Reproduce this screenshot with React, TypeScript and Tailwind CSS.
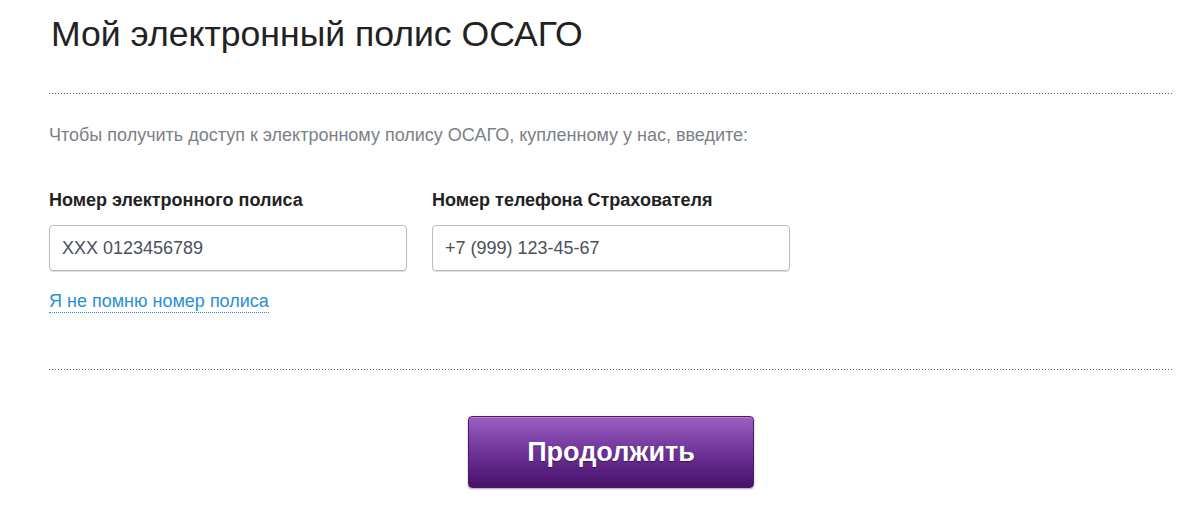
export default function App() {
  const dotted =
    "h-px w-full bg-[linear-gradient(to_right,#666_34%,transparent_0)] bg-[length:3px_1px] bg-repeat-x";

  return (
    <div className="min-h-[518px] bg-white pl-[49px] pr-[27px] font-['Liberation_Sans',Arial,sans-serif]">
      <h1 className="pt-[13px] pl-[2px] text-[35.6px] leading-[42px] text-[#222]">
        Мой электронный полис ОСАГО
      </h1>

      <div className={`mt-[38px] ${dotted}`} />

      <p className="mt-[31px] text-[18px] leading-[20px] text-[#7b7f88]">
        Чтобы получить доступ к электронному полису ОСАГО, купленному у нас, введите:
      </p>

      <div className="mt-[45px] flex gap-[25px]">
        <div className="w-[358px]">
          <label className="block text-[18px] font-bold leading-[20px] text-[#222]">
            Номер электронного полиса
          </label>
          <input
            type="text"
            placeholder="XXX 0123456789"
            className="mt-[15px] h-[46px] w-full rounded-[4px] border border-[#bcbcbc] px-[12px] text-[18px] text-[#4b505b] shadow-[0_1px_1px_rgba(0,0,0,0.15)] outline-none placeholder:text-[#4b505b]"
          />
        </div>
        <div className="w-[358px]">
          <label className="block text-[18px] font-bold leading-[20px] text-[#222]">
            Номер телефона Страхователя
          </label>
          <input
            type="text"
            placeholder="+7 (999) 123-45-67"
            className="mt-[15px] h-[46px] w-full rounded-[4px] border border-[#bcbcbc] px-[12px] text-[18px] text-[#4b505b] shadow-[0_1px_1px_rgba(0,0,0,0.15)] outline-none placeholder:text-[#4b505b]"
          />
        </div>
      </div>

      <div className="mt-[20px] flex">
        <a
          href="#"
          className="border-b border-dotted border-[#2b8fd3] text-[18px] leading-[21px] text-[#2b8fd3]"
        >
          Я не помню номер полиса
        </a>
      </div>

      <div className={`mt-[56px] ${dotted}`} />

      <div className="mt-[46px] flex justify-center">
        <button className="h-[72px] w-[286px] rounded-[4px] border border-[#4a1a68] bg-[linear-gradient(to_bottom,#9b5fc2,#6a2f94_55%,#471268)] text-[27px] font-bold text-white shadow-[0_1px_2px_rgba(0,0,0,0.35),inset_0_1px_0_rgba(255,255,255,0.25)] [text-shadow:0_1px_1px_rgba(0,0,0,0.45)]">
          Продолжить
        </button>
      </div>
    </div>
  );
}
